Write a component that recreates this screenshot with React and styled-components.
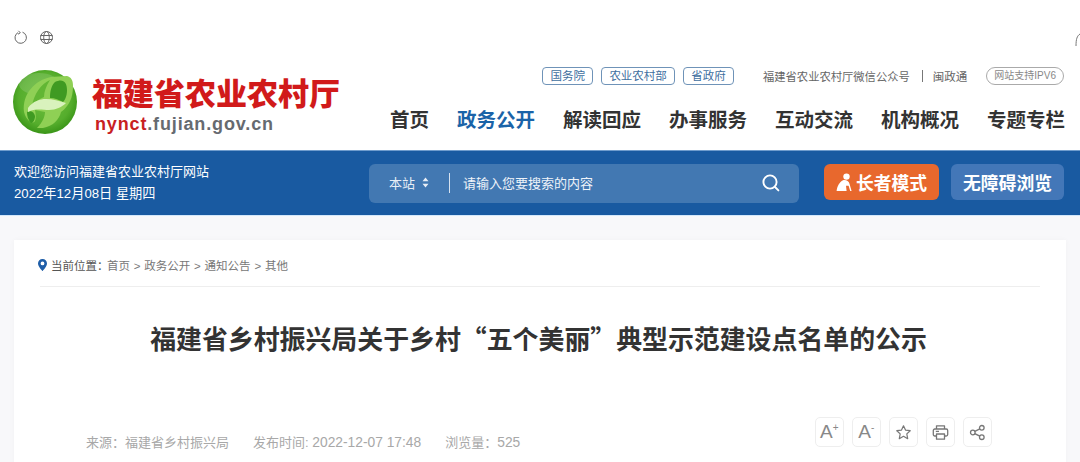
import React from 'react';
import styled, {createGlobalStyle} from 'styled-components';

const CJK = `"Liberation Sans", "Noto Sans CJK SC", sans-serif`;

const Global = createGlobalStyle`
  html, body { margin: 0; padding: 0; background: #fff; }
  body { font-family: ${CJK}; overflow: hidden; }
`;

const Page = styled.div`
  width: 1080px;
  height: 462px;
  overflow: hidden;
  background: #f8f8fa;
  display: flex;
  flex-direction: column;
`;

const Header = styled.header`
  flex: none;
  background: #fff;
  height: 150px;
  display: flex;
  flex-direction: column;
  padding: 29px 15px 0 13px;
  box-sizing: border-box;
  position: relative;
`;

const BrowserIcons = styled.div`
  display: flex;
  gap: 11px;
  height: 17px;
  align-items: center;
`;

const CornerMark = styled.svg`
  position: absolute;
  right: 0;
  top: 33px;
`;

const HeaderMain = styled.div`
  display: flex;
  justify-content: space-between;
  margin-top: 20px;
`;

const Brand = styled.div`
  display: flex;
  gap: 15px;
  align-items: flex-start;
  padding-top: 4px;
`;

const BrandText = styled.div`
  display: flex;
  flex-direction: column;
  padding-top: 4px;
`;

const BrandTitle = styled.div`
  font-family: "Noto Sans CJK SC", sans-serif;
  font-weight: 900;
  font-size: 31px;
  line-height: 36px;
  color: #d11a1a;
  white-space: nowrap;
  width: 250px;
`;

const BrandUrl = styled.div`
  font-family: "Liberation Sans", sans-serif;
  font-weight: 700;
  font-size: 18px;
  line-height: 22px;
  margin: 3px 0 0 3px;
  letter-spacing: 0.85px;
  color: #666a70;
  span { color: #c8201f; }
`;

const HeaderRight = styled.div`
  display: flex;
  flex-direction: column;
  align-items: flex-end;
`;

const LinkRow = styled.div`
  display: flex;
  align-items: center;
  height: 19px;
  margin: 0 1px 0 0;
`;

const Tag = styled.span`
  border: 1px solid #6f93b8;
  border-radius: 4px;
  height: 18px;
  line-height: 16px;
  box-sizing: border-box;
  padding: 0 7.2px;
  font-size: 11.5px;
  color: #3f6f9f;
  margin-right: 8px;
`;

const WechatLink = styled.span`
  font-size: 11.3px;
  color: #666;
  white-space: nowrap;
  margin-left: 21px;
`;

const Plain = styled.span`
  font-size: 11.5px;
  color: #666;
  white-space: nowrap;
`;

const Sep = styled.i`
  display: block;
  width: 1px;
  height: 12px;
  background: #777;
  margin: 0 10px 0 12px;
`;

const Ipv6 = styled.span`
  border: 1px solid #aaa;
  border-radius: 9px;
  height: 18px;
  line-height: 16px;
  box-sizing: border-box;
  padding: 0 7px;
  font-size: 10px;
  color: #888;
  margin-left: 19px;
`;

const Nav = styled.nav`
  display: flex;
  gap: 28px;
  margin-top: 21px;
`;

const NavItem = styled.a`
  font-size: 19.5px;
  font-weight: 700;
  line-height: 28px;
  color: ${p => (p.$active ? '#1a63a8' : '#333')};
  white-space: nowrap;
`;

const BlueBar = styled.div`
  flex: none;
  height: 66px;
  background: #195aa1;
  border-top: 1px solid #6f9ccd;
  border-bottom: 1px solid #d3e8fb;
  box-sizing: border-box;
  display: flex;
  align-items: center;
  padding: 0 16px 0 14px;
`;

const Welcome = styled.div`
  width: 355px;
  flex: none;
  font-size: 13px;
  line-height: 22px;
  color: #fff;
`;

const DateLine = styled.div`
  font-size: 13.2px;
`;

const Search = styled.div`
  width: 430px;
  height: 39px;
  flex: none;
  background: #4278b2;
  border-radius: 6px;
  display: flex;
  align-items: center;
  color: #fff;
  font-size: 13px;
  padding: 0 18px 1px 20px;
  box-sizing: border-box;
`;

const Scope = styled.span`
  display: flex;
  align-items: center;
  gap: 7px;
  color: #e8eef6;
`;

const Divider = styled.i`
  display: block;
  width: 1px;
  height: 20px;
  background: #d6e2f0;
  margin: 0 13px 0 20px;
`;

const Placeholder = styled.span`
  flex: 1;
  color: #eef3f9;
`;

const Modes = styled.div`
  display: flex;
  gap: 12px;
  margin-left: 25px;
  margin-top: -2px;
`;

const ModeButton = styled.button`
  height: 36px;
  border: 0;
  border-radius: 6px;
  padding: 0;
  width: ${p => p.$w}px;
  display: flex;
  align-items: center;
  justify-content: center;
  gap: 4px;
  font-family: inherit;
  font-size: 17.8px;
  font-weight: 700;
  color: #fff;
  background: ${p => p.$bg};
`;

const Content = styled.main`
  flex: 1;
  padding: 24px 14px 0 14px;
`;

const Card = styled.article`
  background: #fff;
  height: 300px;
  padding: 0 26px;
  box-shadow: 0 0 6px rgba(0, 0, 0, 0.03);
`;

const Crumbs = styled.div`
  height: 47px;
  border-bottom: 1px solid #eee;
  display: flex;
  align-items: center;
  font-size: 11.5px;
  word-spacing: 0.6px;
  color: #777;
  white-space: pre;
  padding-top: 4px;
  box-sizing: border-box;
  b { font-weight: 400; color: #555; margin-right: -1.5px; }
`;

const PinMark = styled.svg`
  margin: 0 4px 0 -2px;
`;

const Title = styled.h1`
  margin: 31px 0 0;
  font-family: "Noto Sans CJK SC", sans-serif;
  font-size: 25.9px;
  line-height: 40px;
  font-weight: 700;
  color: #333;
  text-align: center;
  white-space: nowrap;
  text-indent: -3px;
`;

const MetaRow = styled.div`
  margin-top: 59px;
  padding: 0 48px 0 46px;
  display: flex;
  align-items: flex-start;
  justify-content: space-between;
`;

const Meta = styled.div`
  display: flex;
  gap: 24px;
  margin-top: 15px;
  font-size: 13px;
  color: #a8a8a8;
  white-space: nowrap;
`;

const Num = styled.span`
  font-size: 13.8px;
`;

const Tools = styled.div`
  display: flex;
  gap: 7.5px;
`;

const ToolBox = styled.span`
  width: 29.5px;
  height: 30px;
  box-sizing: border-box;
  border: 1px solid #eee;
  border-radius: 5px;
  display: flex;
  align-items: center;
  justify-content: center;
  color: #888;
  font-size: 19px;
  sup { font-size: 10px; line-height: 1; margin-top: -8px; }
`;

const Logo = () => (
  <svg width="64" height="64" viewBox="0 0 64 64">
    <defs>
      <radialGradient id="orb" cx="50%" cy="45%" r="55%">
        <stop offset="0" stopColor="#6fbf3e" />
        <stop offset="0.75" stopColor="#55ad2c" />
        <stop offset="1" stopColor="#3a9518" />
      </radialGradient>
    </defs>
    <circle cx="32" cy="32" r="32" fill="url(#orb)" />
    <ellipse cx="26" cy="14" rx="20" ry="11" fill="#fff" opacity="0.14" />
    <path d="M11 42C9 24 22 10 38 7L54 6C58 7 60 10 60 16C60 28 56 36 48 42C46 50 40 56 30 58L24 58C30 52 32 46 32 42L22 40C24 50 22 54 18 52C14 50 12 46 11 42Z" fill="#8fd055" />
    <path d="M19 36C21 24 28 14 37 10C33 16 31 22 31 27C26 29 22 32 19 36Z" fill="#62b634" />
    <path d="M42 12C50 8 54 12 54 20C54 26 52 30 50 32C46 30 42 28 37 28C37 22 38 16 42 12Z" fill="#3f9a22" />
    <path d="M14 42C18 40 21 42 22 46C22 50 20 53 18 53C15 50 14 46 14 42Z" fill="#3f9a22" />
    <path d="M15 38C20 31 27 29 33 29C40 29 46 31 53 33C49 37 43 40 36 40C30 40 22 38 15 42Z" fill="#d9f2bd" />
  </svg>
);

const Globe = () => (
  <svg width="15" height="15" viewBox="0 0 15 15" fill="none" stroke="#666" strokeWidth="1">
    <circle cx="7.5" cy="7.5" r="6" />
    <ellipse cx="7.5" cy="7.5" rx="2.8" ry="6" />
    <path d="M1.5 5.5H13.5M1.5 9.5H13.5" />
  </svg>
);

const Reload = () => (
  <svg width="15" height="15" viewBox="0 0 15 15" fill="none" stroke="#666" strokeWidth="1">
    <path d="M9.5 2.2A5.7 5.7 0 1 1 5 2.6" />
    <path d="M5.4 0.8L7.3 2.8L5 4.2" />
  </svg>
);

const Elder = () => (
  <svg width="16" height="18" viewBox="0 0 16 18" fill="#fff">
    <circle cx="10.5" cy="3.6" r="3.2" />
    <path d="M7 7.2C10 6.6 12.8 8 13.4 10.6L15.6 18H14.2L12.6 12.8H10L10.6 18H0.6C1.2 13 3.4 9 7 7.2Z" />
  </svg>
);

const Updown = () => (
  <svg width="7" height="11" viewBox="0 0 7 11" fill="#e8eef6">
    <path d="M3.5 0.5L6.5 4.2H0.5ZM3.5 10.5L0.5 6.8H6.5Z" />
  </svg>
);

const SearchIcon = () => (
  <svg width="20" height="20" viewBox="0 0 20 20" fill="none" stroke="#fff" strokeWidth="1.9" strokeLinecap="round">
    <circle cx="9" cy="9" r="6.6" />
    <path d="M14 14L17.4 17.4" />
  </svg>
);

const Pin = () => (
  <PinMark width="9" height="12" viewBox="0 0 9 12">
    <path fillRule="evenodd" fill="#1f5ea8" d="M4.5 0A4.4 4.4 0 0 0 0 4.4C0 7.5 4.5 12 4.5 12S9 7.5 9 4.4A4.4 4.4 0 0 0 4.5 0ZM4.5 2.5A1.9 1.9 0 1 1 4.5 6.3A1.9 1.9 0 0 1 4.5 2.5Z" />
  </PinMark>
);

const Star = () => (
  <svg width="17" height="17" viewBox="0 0 17 17" fill="none" stroke="#777" strokeWidth="1.2" strokeLinejoin="round">
    <path d="M8.5 1.8L10.5 6.1L15.2 6.7L11.8 9.9L12.7 14.7L8.5 12.3L4.3 14.7L5.2 9.9L1.8 6.7L6.5 6.1Z" />
  </svg>
);

const Printer = () => (
  <svg width="17" height="17" viewBox="0 0 17 17" fill="none" stroke="#777" strokeWidth="1.3" strokeLinejoin="round">
    <path d="M4.5 5V1.8H12.5V5" />
    <rect x="1.3" y="5" width="14.4" height="7" rx="1.5" />
    <rect x="4.5" y="10" width="8" height="5.2" fill="#fff" />
    <path d="M3.8 7.4H7" />
  </svg>
);

const Share = () => (
  <svg width="17" height="17" viewBox="0 0 17 17" fill="none" stroke="#777" strokeWidth="1.3">
    <circle cx="3.8" cy="8.5" r="2.3" />
    <circle cx="12.8" cy="3.8" r="2.3" />
    <circle cx="12.8" cy="13.2" r="2.3" />
    <path d="M5.8 7.4L10.8 4.8M5.8 9.6L10.8 12.2" />
  </svg>
);

const navItems = ['首页', '政务公开', '解读回应', '办事服务', '互动交流', '机构概况', '专题专栏'];

// full-width colon, the ascii one comes out too narrow here
const COLON = '\uFF1A';

class App extends React.Component {
  render() {
    return (
      <Page>
        <Global />
        <Header>
          <BrowserIcons>
            <Reload />
            <Globe />
          </BrowserIcons>
          <CornerMark width="5" height="14" viewBox="0 0 5 14" fill="none" stroke="#777">
            <path d="M5 1C2 3 1 6 1 13" />
          </CornerMark>
          <HeaderMain>
            <Brand>
              <Logo />
              <BrandText>
                <BrandTitle>福建省农业农村厅</BrandTitle>
                <BrandUrl><span>nynct</span>.fujian.gov.cn</BrandUrl>
              </BrandText>
            </Brand>
            <HeaderRight>
              <LinkRow>
                <Tag>国务院</Tag>
                <Tag>农业农村部</Tag>
                <Tag>省政府</Tag>
                <WechatLink>福建省农业农村厅微信公众号</WechatLink>
                <Sep />
                <Plain>闽政通</Plain>
                <Ipv6>网站支持IPV6</Ipv6>
              </LinkRow>
              <Nav>
                {navItems.map((item, i) => (
                  <NavItem key={item} $active={i === 1}>{item}</NavItem>
                ))}
              </Nav>
            </HeaderRight>
          </HeaderMain>
        </Header>

        <BlueBar>
          <Welcome>
            <div>欢迎您访问福建省农业农村厅网站</div>
            <DateLine>2022年12月08日 星期四</DateLine>
          </Welcome>
          <Search>
            <Scope>本站 <Updown /></Scope>
            <Divider />
            <Placeholder>请输入您要搜索的内容</Placeholder>
            <SearchIcon />
          </Search>
          <Modes>
            <ModeButton $w={115} $bg="#e8682d"><Elder />长者模式</ModeButton>
            <ModeButton $w={113} $bg="#4377b8">无障碍浏览</ModeButton>
          </Modes>
        </BlueBar>

        <Content>
          <Card>
            <Crumbs>
              <Pin />
              <b>当前位置{COLON}</b>
              <span>首页 &gt; 政务公开 &gt; 通知公告 &gt; 其他</span>
            </Crumbs>
            <Title>福建省乡村振兴局关于乡村“五个美丽”典型示范建设点名单的公示</Title>
            <MetaRow>
              <Meta>
                <span>来源{COLON}福建省乡村振兴局</span>
                <span>发布时间: <Num>2022-12-07 17:48</Num></span>
                <span>浏览量{COLON}<Num>525</Num></span>
              </Meta>
              <Tools>
                <ToolBox>A<sup>+</sup></ToolBox>
                <ToolBox>A<sup>-</sup></ToolBox>
                <ToolBox><Star /></ToolBox>
                <ToolBox><Printer /></ToolBox>
                <ToolBox><Share /></ToolBox>
              </Tools>
            </MetaRow>
          </Card>
        </Content>
      </Page>
    );
  }
}

export default App;
